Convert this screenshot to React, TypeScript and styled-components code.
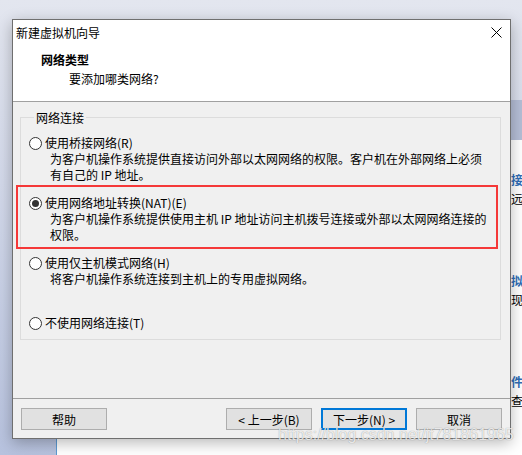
import React from "react";
import styled, { createGlobalStyle } from "styled-components";

const GlobalStyle = createGlobalStyle`
  html, body {
    margin: 0;
    padding: 0;
  }
  body {
    font-family: "Noto Sans CJK SC", "Noto Sans", sans-serif;
    font-size: 12px;
    color: #000;
  }
`;

const options = [
  {
    label: "使用桥接网络",
    key: "R",
    desc: ["为客户机操作系统提供直接访问外部以太网网络的权限。客户机在外部网络上必须", "有自己的 IP 地址。"],
  },
  {
    label: "使用网络地址转换(NAT)",
    key: "E",
    desc: ["为客户机操作系统提供使用主机 IP 地址访问主机拨号连接或外部以太网网络连接的", "权限。"],
    checked: true,
  },
  {
    label: "使用仅主机模式网络",
    key: "H",
    desc: ["将客户机操作系统连接到主机上的专用虚拟网络。"],
  },
  { label: "不使用网络连接", key: "T", desc: [] },
];

// the window behind the dialog only shows its first column of characters
const sideItems = [
  { head: "接", sub: "远" },
  { head: "拟", sub: "现" },
  { head: "件", sub: "查" },
];

const App = () => {
  return (
    <>
      <GlobalStyle />
      <Desktop>
        <BackWindow>
          <BackHeader />
          <SideList>
            {sideItems.map((item) => (
              <SideItem key={item.head}>
                <SideHead>{item.head}</SideHead>
                <SideSub>{item.sub}</SideSub>
              </SideItem>
            ))}
          </SideList>
        </BackWindow>

        <Dialog>
          <TitleBar>
            <span>新建虚拟机向导</span>
            <CloseIcon viewBox="0 0 11 11">
              <path d="M0.5 0.5 L10.5 10.5 M10.5 0.5 L0.5 10.5" stroke="#000" strokeWidth="1" fill="none" />
            </CloseIcon>
          </TitleBar>
          <Header>
            <HeaderTitle>网络类型</HeaderTitle>
            <HeaderSub>要添加哪类网络?</HeaderSub>
          </Header>
          <Rule />
          <Body>
            <GroupBox>
              <Legend>网络连接</Legend>
              {options.map((opt) => (
                <Option key={opt.key}>
                  <OptionRow>
                    <Radio $checked={!!opt.checked} />
                    <span>
                      {opt.label}({opt.key})
                    </span>
                  </OptionRow>
                  <Desc>
                    {opt.desc.map((line) => (
                      <div key={line}>{line}</div>
                    ))}
                  </Desc>
                </Option>
              ))}
            </GroupBox>
          </Body>
          <Rule />
          <Footer>
            <Button>帮助</Button>
            <Spacer />
            <Button>&lt; 上一步(B)</Button>
            <Button $primary>下一步(N) &gt;</Button>
            <Button>取消</Button>
          </Footer>
        </Dialog>

        <Highlight />
        <Watermark>https://blog.csdn.net/jt781861965</Watermark>
      </Desktop>
    </>
  );
};

const Desktop = styled.div`
  position: relative;
  width: 522px;
  height: 455px;
  overflow: hidden;
  background: linear-gradient(180deg, #e3e6ef 0%, #d3d9ea 40%, #b7c2de 100%);
`;

const BackWindow = styled.div`
  position: absolute;
  left: 56px;
  top: 100px;
  right: 0;
  bottom: 0;
  background: #fff;
  border-left: 1px solid #5d9ad2;
  display: flex;
  flex-direction: column;
`;

const BackHeader = styled.div`
  height: 40px;
  background: #b5bed6;
  flex-shrink: 0;
`;

const SideList = styled.div`
  display: flex;
  flex-direction: column;
  gap: 66px;
  padding: 32px 0 0 454px;
  white-space: nowrap;
`;

const SideItem = styled.div`
  display: flex;
  flex-direction: column;
  gap: 3px;
`;

const SideHead = styled.div`
  color: #2f6db5;
  font-size: 12px;
  font-weight: bold;
  line-height: 16px;
`;

const SideSub = styled.div`
  font-size: 12px;
  line-height: 16px;
`;

const Dialog = styled.div`
  position: absolute;
  left: 12px;
  top: 19px;
  width: 499px;
  height: 420px;
  box-sizing: border-box;
  border: 1px solid #6f6f6f;
  background: #fff;
  box-shadow: 0 4px 14px rgba(0, 0, 0, 0.28);
  display: flex;
  flex-direction: column;
`;

const TitleBar = styled.div`
  height: 25px;
  flex-shrink: 0;
  display: flex;
  align-items: center;
  justify-content: space-between;
  padding: 0 8px 0 3px;
  line-height: 15px;
`;

const CloseIcon = styled.svg`
  width: 11px;
  height: 11px;
`;

const Header = styled.div`
  height: 56px;
  flex-shrink: 0;
  box-sizing: border-box;
  padding: 7px 0 0 28px;
  line-height: 15px;
`;

const HeaderTitle = styled.div`
  font-weight: bold;
`;

const HeaderSub = styled.div`
  margin: 4px 0 0 28px;
`;

const Rule = styled.div`
  height: 1px;
  flex-shrink: 0;
  background: #a0a0a0;
`;

const Body = styled.div`
  flex: 1;
  background: #f0f0f0;
  padding: 8px 9px 0 7px;
`;

const GroupBox = styled.fieldset`
  margin: 0;
  height: 230px;
  box-sizing: border-box;
  border: 1px solid #dcdcdc;
  padding: 10px 0 0 8px;
`;

const Legend = styled.legend`
  margin-left: 5px;
  padding: 0 2px;
  line-height: 15px;
`;

const Option = styled.div`
  height: 60px;
  line-height: 16px;
`;

const OptionRow = styled.div`
  display: flex;
  align-items: center;
  gap: 3px;
  height: 16px;
`;

const Radio = styled.span<{ $checked: boolean }>`
  width: 13px;
  height: 13px;
  box-sizing: border-box;
  border-radius: 50%;
  border: 1px solid #333;
  background: #fff;
  display: flex;
  align-items: center;
  justify-content: center;
  &::after {
    content: "";
    width: 7px;
    height: 7px;
    border-radius: 50%;
    background: #333;
    display: ${(p) => (p.$checked ? "block" : "none")};
  }
`;

const Desc = styled.div`
  margin-left: 21px;
`;

const Footer = styled.div`
  height: 39px;
  flex-shrink: 0;
  background: #f0f0f0;
  display: flex;
  align-items: flex-start;
  gap: 9px;
  padding: 9px 8px 0 8px;
  box-sizing: border-box;
`;

const Spacer = styled.div`
  flex: 1;
`;

const Button = styled.button<{ $primary?: boolean }>`
  width: 86px;
  height: 22px;
  box-sizing: border-box;
  background: #e1e1e1;
  border: ${(p) => (p.$primary ? "2px solid #0078d7" : "1px solid #adadad")};
  font-family: inherit;
  font-size: 12px;
  line-height: 15px;
  padding: 0;
  color: #000;
`;

const Highlight = styled.div`
  position: absolute;
  left: 16px;
  top: 185px;
  width: 482px;
  height: 64px;
  box-sizing: border-box;
  border: 2px solid #f53838;
`;

const Watermark = styled.div`
  position: absolute;
  left: 278px;
  top: 426px;
  font-family: "Liberation Sans", Arial, sans-serif;
  font-size: 16px;
  line-height: 18px;
  color: rgba(255, 255, 255, 0.8);
  text-shadow: 0 0 1px rgba(0, 0, 0, 0.4);
  white-space: nowrap;
`;

export default App;
